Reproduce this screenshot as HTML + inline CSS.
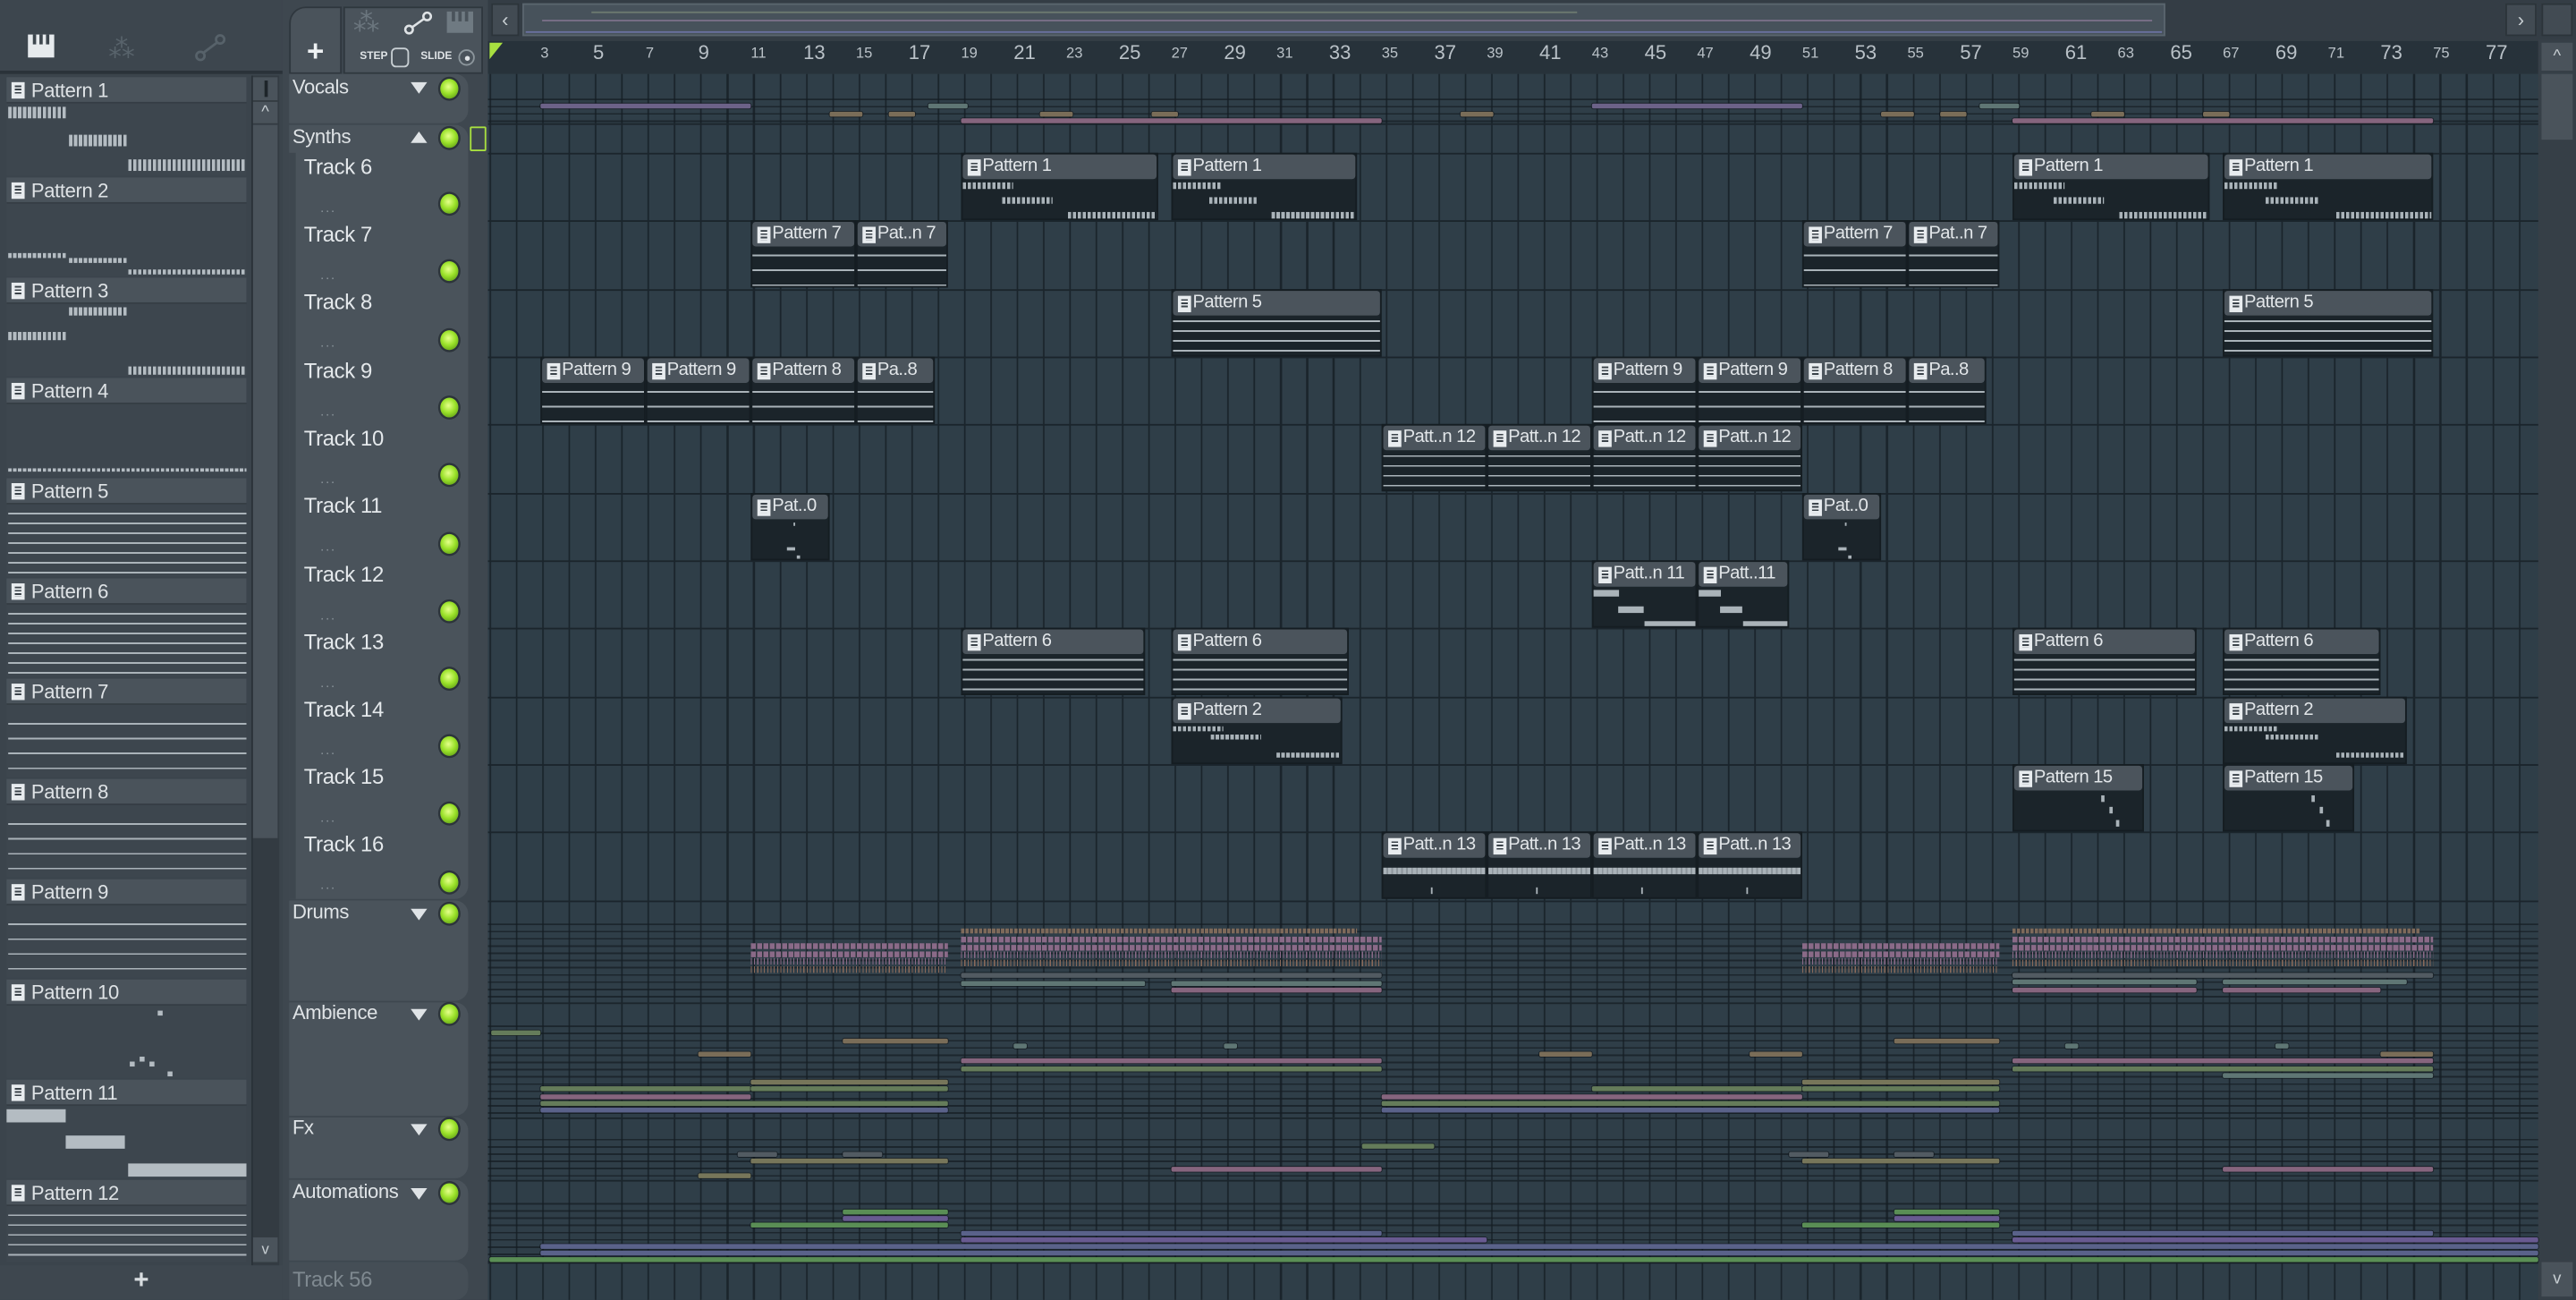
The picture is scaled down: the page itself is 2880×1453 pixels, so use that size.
<!DOCTYPE html>
<html><head><meta charset="utf-8">
<style>
*{margin:0;padding:0;box-sizing:border-box}
html,body{width:2880px;height:1452px;overflow:hidden;background:#2b343c}
#w{position:absolute;left:0;top:0;width:1568px;height:791px;transform:scale(1.83673);transform-origin:0 0;background:#343d45;font-family:"Liberation Sans",sans-serif;color:#d8dde1}
.a{position:absolute}
#lp{left:0;top:0;width:172px;height:791px;background:#3b444c}
.pi{position:absolute;left:4px;width:146px;height:60px;background:#3d464e}
.pi .h{height:16px;background:#4a535b;border-bottom:1px solid #353d44;font-size:12px;line-height:16px;padding-left:15px;color:#dfe3e6;position:relative;letter-spacing:-.2px}
.ic{position:absolute;left:3px;top:3px;width:8px;height:10px;background:#e8ecef;}
.ic::after{content:"";position:absolute;left:2px;top:2px;width:4px;height:6px;background:repeating-linear-gradient(180deg,#3a4249 0 1px,transparent 1px 2px)}
.st{background:repeating-linear-gradient(90deg,#b4bcc2 0 2px,transparent 2px 3px)}
.ln{background:#b4bcc2}
.th{position:absolute;left:176px;width:109px;background:#4a535b;border-radius:0 8px 8px 0}
.tl{position:absolute;font-size:13px;color:#e4e8eb;letter-spacing:-.2px}
.gl{position:absolute;font-size:12px;color:#dfe3e6;letter-spacing:-.2px}
.dot{position:absolute;left:268px;width:11px;height:12px;border-radius:50%;background:radial-gradient(circle at 45% 40%,#e4ff8a 0,#9be22a 45%,#4e8a10 100%);box-shadow:0 0 0 1.3px #2c343a}
.dd{position:absolute;left:195px;font-size:8px;color:#8a949b;letter-spacing:1px}
.tri{position:absolute;left:250px;width:0;height:0;border-left:5px solid transparent;border-right:5px solid transparent}
#g{left:297px;top:45px;width:1248px;height:746px;background-color:#2f3e48;
background-image:repeating-linear-gradient(90deg,#1a242b 0 1px,transparent 1px 16.04px);background-position:1px 0}
.hl{position:absolute;left:297px;width:1248px;height:1px;background:#1b252c}
.sub{position:absolute;left:297px;width:1248px;background:repeating-linear-gradient(180deg,rgba(20,28,34,.7) 0 1px,transparent 1px 4.4px)}
.c{position:absolute;height:41px;background:#1b242a;border:1px solid #151d22}
.c .h{height:15px;background:#4b545c;font-size:11px;line-height:15px;padding-left:12px;color:#e2e6e9;white-space:nowrap;overflow:hidden;position:relative;border-radius:2px;letter-spacing:-.3px}
.c .b{position:absolute;left:0;right:0;top:15px;bottom:0}
.W{background-image:linear-gradient(#aab3b9,#aab3b9)}
.b1{background:
repeating-linear-gradient(90deg,#aab3b9 0 2px,transparent 2px 3px) 0 2px/26% 4px no-repeat,
repeating-linear-gradient(90deg,#aab3b9 0 2px,transparent 2px 3px) 27% 11px/26% 4px no-repeat,
repeating-linear-gradient(90deg,#aab3b9 0 2px,transparent 2px 3px) 100% 20px/46% 4px no-repeat}
.b5{background:repeating-linear-gradient(180deg,transparent 0 3px,#aab3b9 3px 4px,transparent 4px 6px)}
.b7{background:repeating-linear-gradient(180deg,transparent 0 5px,#aab3b9 5px 6px,transparent 6px 9px)}
.b11{background:linear-gradient(#aab3b9,#aab3b9) 0 2px/25% 4px no-repeat,linear-gradient(#aab3b9,#aab3b9) 33% 12px/25% 4px no-repeat,linear-gradient(#aab3b9,#aab3b9) 100% 21px/50% 4px no-repeat}
.b13{background:repeating-linear-gradient(90deg,#aab3b9 0 2px,#8d969c 2px 3px) 0 6px/100% 4px no-repeat,linear-gradient(#aab3b9,#aab3b9) 48% 18px/1px 4px no-repeat}
.b15{background:linear-gradient(#aab3b9,#aab3b9) 70% 3px/2px 4px no-repeat,linear-gradient(#aab3b9,#aab3b9) 76% 10px/2px 4px no-repeat,linear-gradient(#aab3b9,#aab3b9) 82% 18px/2px 4px no-repeat}
.b2{background:
repeating-linear-gradient(90deg,#aab3b9 0 2px,transparent 2px 3px) 0 2px/30% 3px no-repeat,
repeating-linear-gradient(90deg,#aab3b9 0 2px,transparent 2px 3px) 32% 7px/30% 3px no-repeat,
repeating-linear-gradient(90deg,#aab3b9 0 2px,transparent 2px 3px) 100% 18px/38% 3px no-repeat}
.b0{background:linear-gradient(#aab3b9,#aab3b9) 55% 2px/1px 2px no-repeat,linear-gradient(#aab3b9,#aab3b9) 50% 17px/5px 2px no-repeat,linear-gradient(#aab3b9,#aab3b9) 62% 22px/2px 2px no-repeat}
.l{position:absolute;height:4px;border-radius:1px;box-shadow:0 0 0 .5px rgba(10,15,20,.6)}
.pk{background:#86657e}.gr{background:#657c5a}.bl{background:#5a628a}.ol{background:#77765a}.br{background:#7a6d58}.tg{background:#5f7674}.vi{background:#685a90}.bg{background:#5a8e55}.gy{background:#525b62}.pu{background:#6c6288}
.dr{position:absolute;height:20px;background:
repeating-linear-gradient(90deg,#8a6a88 0 3px,#2a3139 3px 3.8px) 0 0/100% 3.5px no-repeat,
repeating-linear-gradient(90deg,#8a6a88 0 3px,#2a3139 3px 3.8px) 0 4.5px/100% 3.5px no-repeat,
repeating-linear-gradient(90deg,#8a6a88 0 .6px,transparent .6px 2px) 0 9px/100% 4px no-repeat,
repeating-linear-gradient(90deg,#8a6a5a 0 .6px,transparent .6px 2px) 0 14px/100% 4px no-repeat}
.ru{position:absolute;top:27px;color:#b9c1c7;font-size:9px}
.ru.b{font-size:12px;top:25px}
</style></head><body><div id="w">

<div class="a" id="lp">
  <div class="a" style="left:0;top:0;width:172px;height:45px;background:#3d464e;border-bottom:2px solid #2a3239"></div>
  <div class="a" style="left:17px;top:21px;width:16px;height:14px;background:#e6eaed"></div>
  <div class="a" style="left:20px;top:21px;width:2px;height:6px;background:#3d464e"></div>
  <div class="a" style="left:24px;top:21px;width:2px;height:6px;background:#3d464e"></div>
  <div class="a" style="left:28px;top:21px;width:2px;height:6px;background:#3d464e"></div>
  <div class="a" style="left:66px;top:20px;color:#58636b;font-size:16px">⁂</div>
  <svg class="a" style="left:118px;top:20px" width="20" height="18"><circle cx="4" cy="14" r="2.5" fill="none" stroke="#57626a" stroke-width="1.5"/><circle cx="16" cy="4" r="2.5" fill="none" stroke="#57626a" stroke-width="1.5"/><line x1="6" y1="12" x2="14" y2="6" stroke="#57626a" stroke-width="1.5"/></svg>
  <div class="a" style="left:153px;top:46px;width:17px;height:724px;background:#333b42;border-left:1px solid #2a3239"></div>
  <div class="a" style="left:154px;top:47px;width:15px;height:14px;background:#4a535b"><div class="a" style="left:7px;top:2px;width:1.5px;height:10px;background:#1e252a"></div></div>
  <div class="a" style="left:154px;top:62px;width:15px;height:13px;background:#4a535b;color:#c8cfd3;font-size:10px;text-align:center;line-height:13px">^</div>
  <div class="a" style="left:154px;top:76px;width:15px;height:434px;background:#4a535b"></div>
  <div class="a" style="left:154px;top:753px;width:15px;height:15px;background:#4a535b;color:#c8cfd3;font-size:9px;text-align:center;line-height:15px">v</div>
  <div class="a" style="left:0;top:770px;width:172px;height:21px;background:#3e474f;color:#d8dde0;font-size:16px;text-align:center;line-height:20px;font-weight:bold">+</div>

  <div class="pi" style="top:47px"><div class="h"><i class="ic"></i>Pattern 1</div>
   <div class="a st" style="left:1px;top:18px;width:36px;height:7px"></div><div class="a st" style="left:38px;top:35px;width:36px;height:7px"></div><div class="a st" style="left:74px;top:50px;width:72px;height:7px"></div></div>
  <div class="pi" style="top:108px"><div class="h"><i class="ic"></i>Pattern 2</div>
   <div class="a st" style="left:1px;top:46px;width:36px;height:3px"></div><div class="a st" style="left:38px;top:49px;width:36px;height:3px"></div><div class="a st" style="left:74px;top:56px;width:72px;height:3px"></div></div>
  <div class="pi" style="top:169px"><div class="h"><i class="ic"></i>Pattern 3</div>
   <div class="a st" style="left:38px;top:18px;width:36px;height:5px"></div><div class="a st" style="left:1px;top:33px;width:36px;height:5px"></div><div class="a st" style="left:74px;top:54px;width:72px;height:5px"></div></div>
  <div class="pi" style="top:230px"><div class="h"><i class="ic"></i>Pattern 4</div>
   <div class="a st" style="left:1px;top:55px;width:145px;height:2px"></div></div>
  <div class="pi" style="top:291px"><div class="h"><i class="ic"></i>Pattern 5</div><div class="a b5" style="left:1px;top:18px;width:145px;height:40px"></div></div>
  <div class="pi" style="top:352px"><div class="h"><i class="ic"></i>Pattern 6</div><div class="a b5" style="left:1px;top:18px;width:145px;height:40px"></div></div>
  <div class="pi" style="top:413px"><div class="h"><i class="ic"></i>Pattern 7</div><div class="a b7" style="left:1px;top:22px;width:145px;height:36px"></div></div>
  <div class="pi" style="top:474px"><div class="h"><i class="ic"></i>Pattern 8</div><div class="a b7" style="left:1px;top:22px;width:145px;height:36px"></div></div>
  <div class="pi" style="top:535px"><div class="h"><i class="ic"></i>Pattern 9</div><div class="a b7" style="left:1px;top:22px;width:145px;height:36px"></div></div>
  <div class="pi" style="top:596px"><div class="h"><i class="ic"></i>Pattern 10</div>
   <div class="a ln" style="left:92px;top:19px;width:3px;height:3px"></div><div class="a ln" style="left:75px;top:50px;width:3px;height:3px"></div><div class="a ln" style="left:81px;top:47px;width:3px;height:3px"></div><div class="a ln" style="left:87px;top:50px;width:3px;height:3px"></div><div class="a ln" style="left:98px;top:56px;width:3px;height:3px"></div></div>
  <div class="pi" style="top:657px"><div class="h"><i class="ic"></i>Pattern 11</div>
   <div class="a ln" style="left:0;top:18px;width:36px;height:8px"></div><div class="a ln" style="left:36px;top:34px;width:36px;height:8px"></div><div class="a ln" style="left:74px;top:51px;width:72px;height:8px"></div></div>
  <div class="pi" style="top:718px;height:50px"><div class="h"><i class="ic"></i>Pattern 12</div><div class="a b5" style="left:1px;top:18px;width:145px;height:32px"></div></div>
</div>

<div class="a" style="left:172px;top:0;width:125px;height:791px;background:#3e474f"></div>
<div class="a" style="left:176px;top:4px;width:32px;height:41px;background:#4a535b;border-radius:10px 0 0 0;border:1px solid #2f373e;color:#eef1f3;font-size:18px;font-weight:bold;text-align:center;line-height:52px">+</div>
<div class="a" style="left:209px;top:4px;width:85px;height:41px;background:#4a535b;border:1px solid #2f373e"></div>
<div class="a" style="left:215px;top:4px;color:#6b767e;font-size:16px">⁂</div>
<svg class="a" style="left:245px;top:6px" width="20" height="16"><circle cx="4" cy="12" r="2.3" fill="none" stroke="#dfe3e6" stroke-width="1.4"/><circle cx="15" cy="4" r="2.3" fill="none" stroke="#dfe3e6" stroke-width="1.4"/><line x1="6" y1="10.5" x2="13" y2="5.5" stroke="#dfe3e6" stroke-width="1.4"/></svg>
<div class="a" style="left:272px;top:7px;width:16px;height:13px;background:#6f7a82"></div>
<div class="a" style="left:275px;top:7px;width:1.5px;height:6px;background:#4a535b"></div><div class="a" style="left:279px;top:7px;width:1.5px;height:6px;background:#4a535b"></div><div class="a" style="left:283px;top:7px;width:1.5px;height:6px;background:#4a535b"></div>
<div class="a" style="left:219px;top:31px;font-size:6.5px;color:#dfe3e6;font-weight:bold">STEP</div>
<div class="a" style="left:238px;top:29px;width:11px;height:12px;border:1.3px solid #c8cfd3;border-radius:3px"></div>
<div class="a" style="left:256px;top:31px;font-size:6.5px;color:#dfe3e6;font-weight:bold">SLIDE</div>
<div class="a" style="left:279px;top:30px;width:10px;height:10px;border:1px solid #8c969c;border-radius:50%"><div class="a" style="left:2.5px;top:2.5px;width:3px;height:3px;background:#dfe3e6;border-radius:50%"></div></div>

<div class="th" style="top:45px;height:30px"></div>
<div class="th" style="top:76px;height:471px"></div>
<div class="th" style="top:548px;height:61px"></div>
<div class="th" style="top:610px;height:69px"></div>
<div class="th" style="top:680px;height:37px"></div>
<div class="th" style="top:718px;height:49px"></div>
<div class="th" style="top:768px;height:23px;background:#454e56"></div>
<div class="a" style="left:176px;top:93px;width:4px;height:454px;background:#3e474f"></div>

<div class="gl" style="left:178px;top:46px">Vocals</div><div class="tri" style="top:50px;border-top:7px solid #dfe3e6"></div><div class="dot" style="top:48px"></div>
<div class="gl" style="left:178px;top:76px">Synths</div><div class="tri" style="top:80px;border-bottom:7px solid #dfe3e6"></div><div class="dot" style="top:78px"></div>
<div class="tl" style="left:185px;top:94px">Track 6</div><div class="dd" style="top:122px">...</div><div class="dot" style="top:118px"></div>
<div class="tl" style="left:185px;top:135px">Track 7</div><div class="dd" style="top:163px">...</div><div class="dot" style="top:159px"></div>
<div class="tl" style="left:185px;top:176px">Track 8</div><div class="dd" style="top:204px">...</div><div class="dot" style="top:201px"></div>
<div class="tl" style="left:185px;top:218px">Track 9</div><div class="dd" style="top:246px">...</div><div class="dot" style="top:242px"></div>
<div class="tl" style="left:185px;top:259px">Track 10</div><div class="dd" style="top:287px">...</div><div class="dot" style="top:283px"></div>
<div class="tl" style="left:185px;top:300px">Track 11</div><div class="dd" style="top:328px">...</div><div class="dot" style="top:325px"></div>
<div class="tl" style="left:185px;top:342px">Track 12</div><div class="dd" style="top:370px">...</div><div class="dot" style="top:366px"></div>
<div class="tl" style="left:185px;top:383px">Track 13</div><div class="dd" style="top:411px">...</div><div class="dot" style="top:407px"></div>
<div class="tl" style="left:185px;top:424px">Track 14</div><div class="dd" style="top:452px">...</div><div class="dot" style="top:448px"></div>
<div class="tl" style="left:185px;top:465px">Track 15</div><div class="dd" style="top:493px">...</div><div class="dot" style="top:489px"></div>
<div class="tl" style="left:185px;top:506px">Track 16</div><div class="dd" style="top:534px">...</div><div class="dot" style="top:531px"></div>
<div class="gl" style="left:178px;top:548px">Drums</div><div class="tri" style="top:553px;border-top:7px solid #dfe3e6"></div><div class="dot" style="top:550px"></div>
<div class="gl" style="left:178px;top:609px">Ambience</div><div class="tri" style="top:614px;border-top:7px solid #dfe3e6"></div><div class="dot" style="top:611px"></div>
<div class="gl" style="left:178px;top:679px">Fx</div><div class="tri" style="top:684px;border-top:7px solid #dfe3e6"></div><div class="dot" style="top:681px"></div>
<div class="gl" style="left:178px;top:718px">Automations</div><div class="tri" style="top:723px;border-top:7px solid #dfe3e6"></div><div class="dot" style="top:720px"></div>
<div class="tl" style="left:178px;top:771px;color:#7f8990">Track 56</div>

<div class="a" style="left:297px;top:0;width:1271px;height:25px;background:#343d45"></div>
<div class="a" style="left:299px;top:2px;width:17px;height:20px;background:#424b53;border:1px solid #2c343a;color:#c8cfd3;font-size:12px;text-align:center;line-height:18px">‹</div>
<div class="a" style="left:318px;top:2px;width:1000px;height:20px;background:#47525b;border:1px solid #5a656e"></div>
<div class="a" style="left:360px;top:7px;width:600px;height:1px;background:#6d7a70"></div>
<div class="a" style="left:330px;top:12px;width:980px;height:1px;background:#7a7088"></div>
<div class="a" style="left:320px;top:19px;width:996px;height:1px;background:#6a72a0"></div>
<div class="a" style="left:1525px;top:2px;width:19px;height:20px;background:#424b53;border:1px solid #2c343a;color:#c8cfd3;font-size:12px;text-align:center;line-height:18px">›</div>
<div class="a" style="left:1547px;top:2px;width:19px;height:20px;background:#424b53;border:1px solid #2c343a"></div>
<div class="a" style="left:297px;top:25px;width:1248px;height:20px;background:#27323a"></div>
<div class="a" style="left:298px;top:26px;width:0;height:0;border-left:8px solid #a8e040;border-bottom:10px solid transparent"></div>
<div class="ru" style="left:329px">3</div><div class="ru b" style="left:361px">5</div><div class="ru" style="left:393px">7</div><div class="ru b" style="left:425px">9</div>
<div class="ru" style="left:457px">11</div><div class="ru b" style="left:489px">13</div><div class="ru" style="left:521px">15</div><div class="ru b" style="left:553px">17</div>
<div class="ru" style="left:585px">19</div><div class="ru b" style="left:617px">21</div><div class="ru" style="left:649px">23</div><div class="ru b" style="left:681px">25</div>
<div class="ru" style="left:713px">27</div><div class="ru b" style="left:745px">29</div><div class="ru" style="left:777px">31</div><div class="ru b" style="left:809px">33</div>
<div class="ru" style="left:841px">35</div><div class="ru b" style="left:873px">37</div><div class="ru" style="left:905px">39</div><div class="ru b" style="left:937px">41</div>
<div class="ru" style="left:969px">43</div><div class="ru b" style="left:1001px">45</div><div class="ru" style="left:1033px">47</div><div class="ru b" style="left:1065px">49</div>
<div class="ru" style="left:1097px">51</div><div class="ru b" style="left:1129px">53</div><div class="ru" style="left:1161px">55</div><div class="ru b" style="left:1193px">57</div>
<div class="ru" style="left:1225px">59</div><div class="ru b" style="left:1257px">61</div><div class="ru" style="left:1289px">63</div><div class="ru b" style="left:1321px">65</div>
<div class="ru" style="left:1353px">67</div><div class="ru b" style="left:1385px">69</div><div class="ru" style="left:1417px">71</div><div class="ru b" style="left:1449px">73</div>
<div class="ru" style="left:1481px">75</div><div class="ru b" style="left:1513px">77</div>
<div class="a" style="left:1545px;top:24px;width:23px;height:767px;background:#363f47"></div>
<div class="a" style="left:1547px;top:26px;width:19px;height:17px;background:#4a535b;color:#c8cfd3;font-size:10px;text-align:center;line-height:17px">^</div>
<div class="a" style="left:1547px;top:45px;width:19px;height:40px;background:#4a535b"></div>
<div class="a" style="left:1547px;top:768px;width:19px;height:21px;background:#4a535b;color:#c8cfd3;font-size:10px;text-align:center;line-height:21px">v</div>

<div class="a" id="g"></div>
<div class="sub" style="top:60px;height:15px"></div>
<div class="sub" style="top:562px;height:48px"></div>
<div class="sub" style="top:624px;height:56px"></div>
<div class="sub" style="top:693px;height:25px"></div>
<div class="sub" style="top:732px;height:36px"></div>
<div class="hl" style="top:75px"></div><div class="hl" style="top:93px"></div><div class="hl" style="top:134px"></div><div class="hl" style="top:176px"></div><div class="hl" style="top:217px"></div><div class="hl" style="top:258px"></div><div class="hl" style="top:300px"></div><div class="hl" style="top:341px"></div><div class="hl" style="top:382px"></div><div class="hl" style="top:424px"></div><div class="hl" style="top:465px"></div><div class="hl" style="top:506px"></div><div class="hl" style="top:548px"></div><div class="hl" style="top:610px"></div><div class="hl" style="top:680px"></div><div class="hl" style="top:718px"></div><div class="hl" style="top:768px"></div>
<div class="a" style="left:286px;top:77px;width:10px;height:15px;border:1.3px solid #a8e040;border-radius:1px"></div>

<div class="l pu" style="left:329px;top:63px;width:128px;height:3px"></div>
<div class="l pu" style="left:969px;top:63px;width:128px;height:3px"></div>
<div class="l tg" style="left:565px;top:63px;width:24px;height:3px"></div>
<div class="l tg" style="left:1205px;top:63px;width:24px;height:3px"></div>
<div class="l br" style="left:505px;top:68px;width:20px;height:3px"></div><div class="l br" style="left:541px;top:68px;width:16px;height:3px"></div><div class="l br" style="left:633px;top:68px;width:20px;height:3px"></div><div class="l br" style="left:701px;top:68px;width:16px;height:3px"></div><div class="l br" style="left:889px;top:68px;width:20px;height:3px"></div><div class="l br" style="left:1145px;top:68px;width:20px;height:3px"></div><div class="l br" style="left:1181px;top:68px;width:16px;height:3px"></div><div class="l br" style="left:1273px;top:68px;width:20px;height:3px"></div><div class="l br" style="left:1341px;top:68px;width:16px;height:3px"></div>
<div class="l pk" style="left:585px;top:72px;width:256px;height:3px"></div>
<div class="l pk" style="left:1225px;top:72px;width:256px;height:3px"></div>

<div class="c" style="left:585px;top:93px;width:120px"><div class="h"><i class="ic"></i>Pattern 1</div><div class="b b1"></div></div>
<div class="c" style="left:713px;top:93px;width:113px"><div class="h"><i class="ic"></i>Pattern 1</div><div class="b b1"></div></div>
<div class="c" style="left:1225px;top:93px;width:120px"><div class="h"><i class="ic"></i>Pattern 1</div><div class="b b1"></div></div>
<div class="c" style="left:1353px;top:93px;width:128px"><div class="h"><i class="ic"></i>Pattern 1</div><div class="b b1"></div></div>

<div class="c" style="left:457px;top:134px;width:64px"><div class="h"><i class="ic"></i>Pattern 7</div><div class="b b7"></div></div>
<div class="c" style="left:521px;top:134px;width:56px"><div class="h"><i class="ic"></i>Pat..n 7</div><div class="b b7"></div></div>
<div class="c" style="left:1097px;top:134px;width:64px"><div class="h"><i class="ic"></i>Pattern 7</div><div class="b b7"></div></div>
<div class="c" style="left:1161px;top:134px;width:56px"><div class="h"><i class="ic"></i>Pat..n 7</div><div class="b b7"></div></div>

<div class="c" style="left:713px;top:176px;width:128px"><div class="h"><i class="ic"></i>Pattern 5</div><div class="b b5"></div></div>
<div class="c" style="left:1353px;top:176px;width:128px"><div class="h"><i class="ic"></i>Pattern 5</div><div class="b b5"></div></div>

<div class="c" style="left:329px;top:217px;width:64px"><div class="h"><i class="ic"></i>Pattern 9</div><div class="b b7"></div></div>
<div class="c" style="left:393px;top:217px;width:64px"><div class="h"><i class="ic"></i>Pattern 9</div><div class="b b7"></div></div>
<div class="c" style="left:457px;top:217px;width:64px"><div class="h"><i class="ic"></i>Pattern 8</div><div class="b b7"></div></div>
<div class="c" style="left:521px;top:217px;width:48px"><div class="h"><i class="ic"></i>Pa..8</div><div class="b b7"></div></div>
<div class="c" style="left:969px;top:217px;width:64px"><div class="h"><i class="ic"></i>Pattern 9</div><div class="b b7"></div></div>
<div class="c" style="left:1033px;top:217px;width:64px"><div class="h"><i class="ic"></i>Pattern 9</div><div class="b b7"></div></div>
<div class="c" style="left:1097px;top:217px;width:64px"><div class="h"><i class="ic"></i>Pattern 8</div><div class="b b7"></div></div>
<div class="c" style="left:1161px;top:217px;width:48px"><div class="h"><i class="ic"></i>Pa..8</div><div class="b b7"></div></div>

<div class="c" style="left:841px;top:258px;width:64px"><div class="h"><i class="ic"></i>Patt..n 12</div><div class="b b5"></div></div>
<div class="c" style="left:905px;top:258px;width:64px"><div class="h"><i class="ic"></i>Patt..n 12</div><div class="b b5"></div></div>
<div class="c" style="left:969px;top:258px;width:64px"><div class="h"><i class="ic"></i>Patt..n 12</div><div class="b b5"></div></div>
<div class="c" style="left:1033px;top:258px;width:64px"><div class="h"><i class="ic"></i>Patt..n 12</div><div class="b b5"></div></div>

<div class="c" style="left:457px;top:300px;width:48px"><div class="h"><i class="ic"></i>Pat..0</div><div class="b b0"></div></div>
<div class="c" style="left:1097px;top:300px;width:48px"><div class="h"><i class="ic"></i>Pat..0</div><div class="b b0"></div></div>

<div class="c" style="left:969px;top:341px;width:64px"><div class="h"><i class="ic"></i>Patt..n 11</div><div class="b b11"></div></div>
<div class="c" style="left:1033px;top:341px;width:56px"><div class="h"><i class="ic"></i>Patt..11</div><div class="b b11"></div></div>

<div class="c" style="left:585px;top:382px;width:112px"><div class="h"><i class="ic"></i>Pattern 6</div><div class="b b5"></div></div>
<div class="c" style="left:713px;top:382px;width:108px"><div class="h"><i class="ic"></i>Pattern 6</div><div class="b b5"></div></div>
<div class="c" style="left:1225px;top:382px;width:112px"><div class="h"><i class="ic"></i>Pattern 6</div><div class="b b5"></div></div>
<div class="c" style="left:1353px;top:382px;width:96px"><div class="h"><i class="ic"></i>Pattern 6</div><div class="b b5"></div></div>

<div class="c" style="left:713px;top:424px;width:104px"><div class="h"><i class="ic"></i>Pattern 2</div><div class="b b2"></div></div>
<div class="c" style="left:1353px;top:424px;width:112px"><div class="h"><i class="ic"></i>Pattern 2</div><div class="b b2"></div></div>

<div class="c" style="left:1225px;top:465px;width:80px"><div class="h"><i class="ic"></i>Pattern 15</div><div class="b b15"></div></div>
<div class="c" style="left:1353px;top:465px;width:80px"><div class="h"><i class="ic"></i>Pattern 15</div><div class="b b15"></div></div>

<div class="c" style="left:841px;top:506px;width:64px"><div class="h"><i class="ic"></i>Patt..n 13</div><div class="b b13"></div></div>
<div class="c" style="left:905px;top:506px;width:64px"><div class="h"><i class="ic"></i>Patt..n 13</div><div class="b b13"></div></div>
<div class="c" style="left:969px;top:506px;width:64px"><div class="h"><i class="ic"></i>Patt..n 13</div><div class="b b13"></div></div>
<div class="c" style="left:1033px;top:506px;width:64px"><div class="h"><i class="ic"></i>Patt..n 13</div><div class="b b13"></div></div>

<div class="a" style="left:585px;top:565px;width:241px;height:3px;background:repeating-linear-gradient(90deg,#7e6a5a 0 2px,#2a3139 2px 2.7px)"></div>
<div class="a" style="left:1225px;top:565px;width:248px;height:3px;background:repeating-linear-gradient(90deg,#7e6a5a 0 2px,#2a3139 2px 2.7px)"></div>
<div class="dr" style="left:457px;top:574px;width:120px"></div>
<div class="dr" style="left:585px;top:570px;width:256px"></div>
<div class="dr" style="left:1097px;top:574px;width:120px"></div>
<div class="dr" style="left:1225px;top:570px;width:256px"></div>
<div class="l gy" style="left:585px;top:592px;width:256px;height:3px"></div>
<div class="l gy" style="left:1225px;top:592px;width:256px;height:3px"></div>
<div class="l tg" style="left:585px;top:597px;width:112px;height:3px"></div>
<div class="l tg" style="left:713px;top:597px;width:128px;height:3px"></div>
<div class="l tg" style="left:1225px;top:596px;width:112px;height:3px"></div>
<div class="l tg" style="left:1353px;top:596px;width:112px;height:3px"></div>
<div class="l pk" style="left:713px;top:601px;width:128px;height:3px"></div>
<div class="l pk" style="left:1225px;top:601px;width:112px;height:3px"></div>
<div class="l pk" style="left:1353px;top:601px;width:96px;height:3px"></div>

<div class="l gr" style="left:299px;top:627px;width:30px;height:3px"></div>
<div class="l br" style="left:513px;top:632px;width:64px;height:3px"></div>
<div class="l br" style="left:1153px;top:632px;width:64px;height:3px"></div>
<div class="l tg" style="left:617px;top:635px;width:8px;height:3px"></div>
<div class="l tg" style="left:745px;top:635px;width:8px;height:3px"></div>
<div class="l tg" style="left:1257px;top:635px;width:8px;height:3px"></div>
<div class="l tg" style="left:1385px;top:635px;width:8px;height:3px"></div>
<div class="l br" style="left:425px;top:640px;width:32px;height:3px"></div>
<div class="l br" style="left:937px;top:640px;width:32px;height:3px"></div>
<div class="l br" style="left:1065px;top:640px;width:32px;height:3px"></div>
<div class="l br" style="left:1449px;top:640px;width:32px;height:3px"></div>
<div class="l pk" style="left:585px;top:644px;width:256px;height:3px"></div>
<div class="l pk" style="left:1225px;top:644px;width:256px;height:3px"></div>
<div class="l gr" style="left:585px;top:649px;width:256px;height:3px"></div>
<div class="l gr" style="left:1225px;top:649px;width:256px;height:3px"></div>
<div class="l tg" style="left:1353px;top:653px;width:128px;height:3px"></div>
<div class="l ol" style="left:457px;top:657px;width:120px;height:3px"></div>
<div class="l ol" style="left:1097px;top:657px;width:120px;height:3px"></div>
<div class="l gr" style="left:329px;top:661px;width:128px;height:3px"></div>
<div class="l gr" style="left:457px;top:661px;width:120px;height:3px"></div>
<div class="l gr" style="left:969px;top:661px;width:128px;height:3px"></div>
<div class="l gr" style="left:1097px;top:661px;width:120px;height:3px"></div>
<div class="l pk" style="left:329px;top:666px;width:128px;height:3px"></div>
<div class="l pk" style="left:841px;top:666px;width:256px;height:3px"></div>
<div class="l gr" style="left:329px;top:670px;width:248px;height:3px"></div>
<div class="l gr" style="left:841px;top:670px;width:376px;height:3px"></div>
<div class="l bl" style="left:329px;top:674px;width:248px;height:3px"></div>
<div class="l bl" style="left:841px;top:674px;width:376px;height:3px"></div>

<div class="l gr" style="left:829px;top:696px;width:44px;height:3px"></div>
<div class="l gy" style="left:449px;top:701px;width:24px;height:3px"></div>
<div class="l gy" style="left:513px;top:701px;width:24px;height:3px"></div>
<div class="l gy" style="left:1089px;top:701px;width:24px;height:3px"></div>
<div class="l gy" style="left:1153px;top:701px;width:24px;height:3px"></div>
<div class="l ol" style="left:457px;top:705px;width:120px;height:3px"></div>
<div class="l ol" style="left:1097px;top:705px;width:120px;height:3px"></div>
<div class="l pk" style="left:713px;top:710px;width:128px;height:3px"></div>
<div class="l pk" style="left:1353px;top:710px;width:128px;height:3px"></div>
<div class="l ol" style="left:425px;top:714px;width:32px;height:3px"></div>

<div class="l bg" style="left:513px;top:736px;width:64px;height:3px"></div>
<div class="l bg" style="left:1153px;top:736px;width:64px;height:3px"></div>
<div class="l vi" style="left:513px;top:740px;width:64px;height:3px"></div>
<div class="l vi" style="left:1153px;top:740px;width:64px;height:3px"></div>
<div class="l bg" style="left:457px;top:744px;width:120px;height:3px"></div>
<div class="l bg" style="left:1097px;top:744px;width:120px;height:3px"></div>
<div class="l bl" style="left:585px;top:749px;width:256px;height:3px"></div>
<div class="l bl" style="left:1225px;top:749px;width:256px;height:3px"></div>
<div class="l vi" style="left:585px;top:753px;width:320px;height:3px"></div>
<div class="l vi" style="left:1225px;top:753px;width:320px;height:3px"></div>
<div class="l bl" style="left:329px;top:757px;width:1216px;height:3px"></div>
<div class="l bl" style="left:329px;top:761px;width:1216px;height:3px"></div>
<div class="l bg" style="left:298px;top:765px;width:1247px;height:3px"></div>

</div></body></html>
